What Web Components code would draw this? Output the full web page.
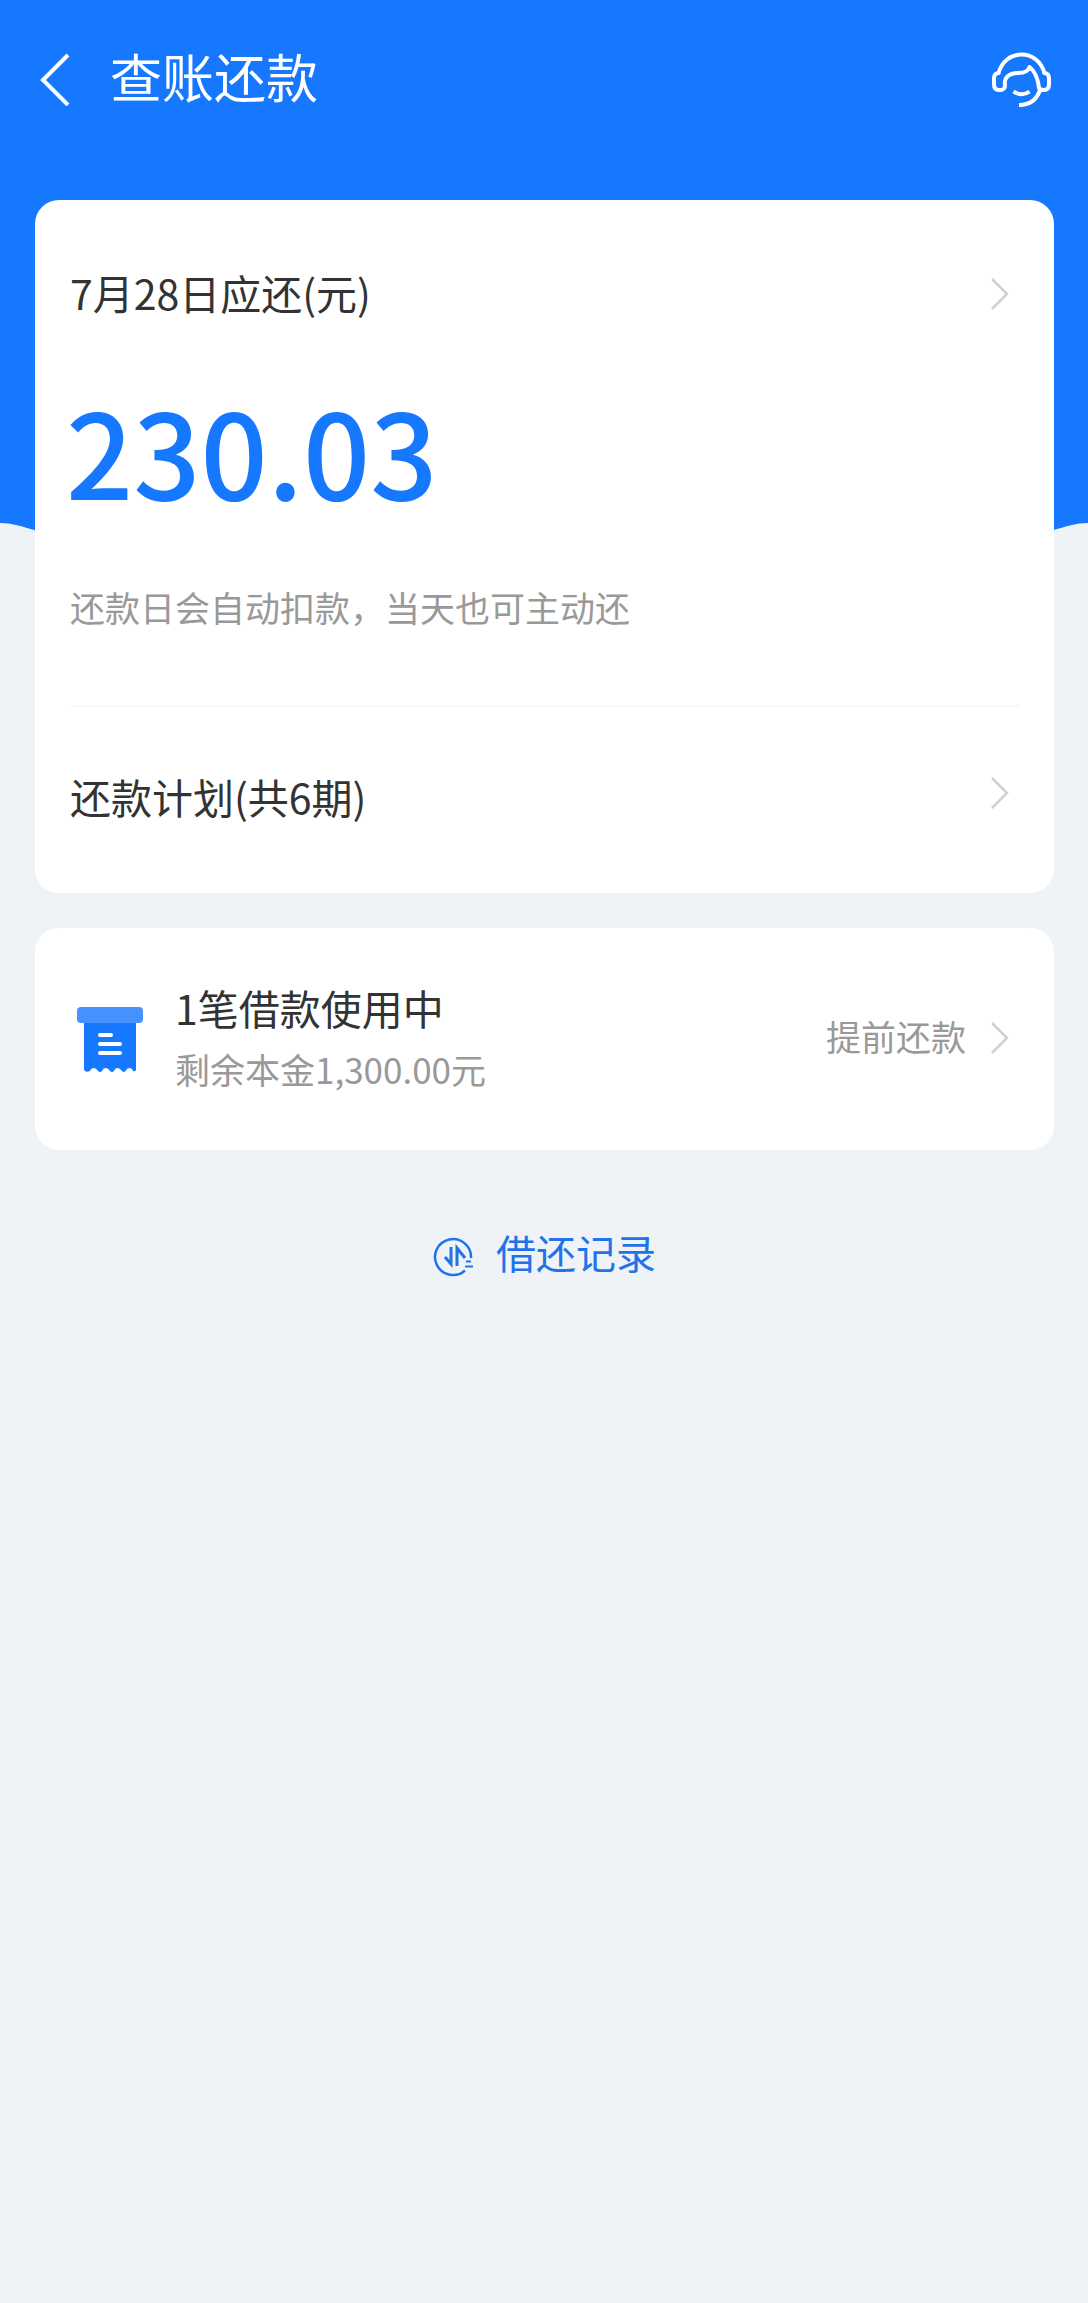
<!DOCTYPE html>
<html lang="zh-CN">
<head>
<meta charset="utf-8">
<meta name="viewport" content="width=device-width, initial-scale=1">
<title>查账还款</title>
<style>
  html { background: #eff3f8; }
  body { margin: 0; font-family: "Noto Sans CJK SC", sans-serif; color: #333; }
</style>
</head>
<body>
<repay-page>
  <nav-bar slot="header" heading="查账还款"></nav-bar>
  <info-card>
    <due-summary label="7月28日应还(元)" amount="230.03" note="还款日会自动扣款，当天也可主动还"></due-summary>
    <plan-row label="还款计划(共6期)"></plan-row>
  </info-card>
  <info-card>
    <loan-row heading="1笔借款使用中" detail="剩余本金1,300.00元" action="提前还款"></loan-row>
  </info-card>
  <record-link>借还记录</record-link>
</repay-page>

<script>
const define = (name, render) => customElements.define(name, class extends HTMLElement {
  connectedCallback() {
    if (this.shadowRoot) return;
    this.attachShadow({ mode: 'open' }).innerHTML = render(this);
  }
});
const attr = (el, name) => el.getAttribute(name) || '';

define('repay-page', () => `
  <style>
    :host { display: block; }
    .hero { display: flex; flex-direction: column; height: 532px; }
    .blue { flex: 1; background: #1677ff; }
    .wave { display: block; width: 100%; height: 9px; }
    main { display: flex; flex-direction: column; gap: 35px; margin-top: -332px; padding: 0 34px 0 35px; position: relative; }
  </style>
  <div class="hero">
    <div class="blue"><slot name="header"></slot></div>
    <svg class="wave" viewBox="0 0 1088 9" preserveAspectRatio="none" aria-hidden="true"><path d="M0 0H1088C1076 0 1068 3 1050 8L1040 9H48L38 8C20 3 12 0 0 0Z" fill="#1677ff"/></svg>
  </div>
  <main><slot></slot></main>`);

define('nav-bar', el => `
  <style>
    :host { display: block; color: #fff; }
    header { display: flex; align-items: center; height: 156px; padding: 0 36px 0 35px; }
    button { display: block; padding: 0; border: 0; background: none; color: inherit; }
    svg { display: block; fill: none; stroke: currentColor; }
    h1 { flex: 1; margin: 0 0 0 39px; padding-bottom: 4px; font-size: 52px; line-height: 76px; font-weight: 400; }
  </style>
  <header>
    <button type="button" aria-label="返回"><svg width="36" height="56" viewBox="0 0 36 56" stroke-width="4"><path d="M33 5L8 30L33 55"/></svg></button>
    <h1>${attr(el, 'heading')}</h1>
    <button type="button" aria-label="客服">
      <svg width="64" height="60" viewBox="988 48 64 60" stroke-width="4" stroke-linecap="round" stroke-linejoin="round">
        <path d="M998.500 73C1002 61 1011 54.500 1021.500 54.500C1032 54.500 1041 61 1044.500 73"/>
        <path d="M998.500 73C995 73.500 994 75 994 78V84C994 88 996 90 999 90H1001C1003.500 90 1005 88 1005 85C1003.500 77 1010 73 1018 73C1024 73 1028 72 1029.500 67C1036 72 1038 79 1039 88C1040 90 1042 90 1044 90C1047 90 1049 88 1049 84V78C1049 75 1047.500 73.500 1044.500 73"/>
        <path d="M1040 90C1037 99 1031 105 1019 105M1013.500 91.500C1019 95 1025 95 1029.500 91.500" stroke-linecap="butt"/>
      </svg>
    </button>
  </header>`);

define('info-card', () => `
  <style>:host { display: block; background: #fff; border-radius: 24px; padding: 0 34px 0 35px; }</style>
  <slot></slot>`);

define('chevron-icon', () => `
  <style>:host { display: block; } svg { display: block; }</style>
  <svg width="20" height="34" viewBox="0 0 20 34" fill="none" stroke="#d0d0d0" stroke-width="2.500" aria-hidden="true"><path d="M2 2L17 17L2 32"/></svg>`);

const rowStyle = `
    :host { display: block; }
    a { display: flex; align-items: center; justify-content: space-between; padding-right: 10px; color: inherit; text-decoration: none; font-size: 41px; line-height: 58px; }
    span { padding-bottom: 4px; line-height: 54px; }`;

define('due-summary', el => `
  <style>${rowStyle}
    :host { padding: 65px 0 73px; border-bottom: 2px solid #f7f7f7; }
    .amount { margin: 40px 0 0 -4px; color: #1677ff; font-size: 118px; line-height: 172px; font-weight: 500; }
    .note { margin: 47px 0 0; color: #999; font-size: 35px; line-height: 50px; }
  </style>
  <a href="#due"><span>${attr(el, 'label')}</span><chevron-icon></chevron-icon></a>
  <p class="amount">${attr(el, 'amount')}</p>
  <p class="note">${attr(el, 'note')}</p>`);

define('plan-row', el => `
  <style>${rowStyle}
    :host { padding: 62px 0 66px; }
    chevron-icon { align-self: flex-start; margin-top: 7px; }
  </style>
  <a href="#plan"><span>${attr(el, 'label')}</span><chevron-icon></chevron-icon></a>`);

define('loan-row', el => `
  <style>${rowStyle}
    :host { padding: 50px 0 52px; }
    .icon { display: block; margin: 4px 29px 0 4px; }
    .text { flex: 1; }
    p { margin: 0; }
    .detail { margin-top: 4px; color: #999; font-size: 35px; }
    .action { color: #999; font-size: 35px; margin-right: 24px; }
  </style>
  <a href="#loan">
    <svg class="icon" width="72" height="72" viewBox="0 0 72 72" aria-hidden="true">
      <path d="M10 12H62V66Q61 68 59 67Q58 64 55.500 64Q53 64 51.500 67Q50 69 48 67Q46 64 43.500 64Q41 64 40 67Q38 69 36 67Q34 64 32 64Q29 64 28 67Q26 69 24 67Q22 64 20 64Q17 64 16 67Q12 69 10 66Z" fill="#1677ff"/>
      <rect x="3" y="3" width="66" height="16" rx="4" fill="#4592ff"/>
      <path d="M26 31H37M26 40H46M26 49H46" stroke="#fff" stroke-width="4" stroke-linecap="round"/>
    </svg>
    <div class="text"><p>${attr(el, 'heading')}</p><p class="detail">${attr(el, 'detail')}</p></div>
    <span class="action">${attr(el, 'action')}</span>
    <chevron-icon></chevron-icon>
  </a>`);

define('record-link', () => `
  <style>
    :host { display: flex; justify-content: center; padding-top: 40px; }
    a { display: flex; align-items: center; gap: 21px; color: #1f74e8; text-decoration: none; font-size: 40px; }
    span { padding-bottom: 4px; line-height: 54px; }
    svg { display: block; margin-top: 6px; }
  </style>
  <a href="#records">
    <svg width="42" height="42" viewBox="0 0 42 42" fill="none" stroke="currentColor" stroke-width="2.500" aria-hidden="true">
      <path d="M38 22A18 18 0 1 0 32 34.500"/>
      <path d="M12 21L18 28V11M24 30V12L32 22" stroke-width="3"/>
      <path d="M33 25.500H38M32 30.500H40" stroke-width="2"/>
    </svg>
    <span><slot></slot></span>
  </a>`);
</script>
</body>
</html>
